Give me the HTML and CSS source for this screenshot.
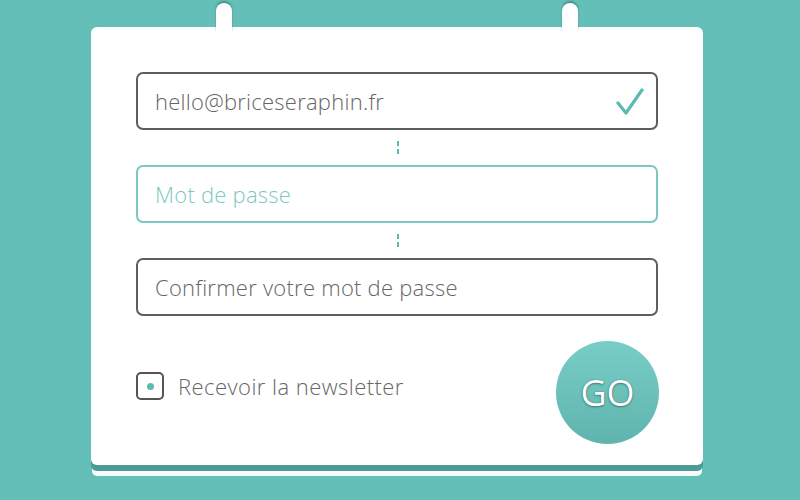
FILE: index.html
```html
<!DOCTYPE html>
<html lang="fr">
<head>
<meta charset="utf-8">
<title>Inscription</title>
<link rel="stylesheet" href="styles.css">
</head>
<body>
<div class="stage">
  <form class="card">
    <span class="peg peg-left"></span>
    <span class="peg peg-right"></span>

    <div class="field field-valid">
      <span class="field-text">hello@briceseraphin.fr</span>
      <svg class="check" width="28" height="28" viewBox="0 0 28 28" aria-hidden="true">
        <path d="M2 15 L10 25 L26 2" fill="none" stroke="#5dbab2" stroke-width="3.2" stroke-linecap="round" stroke-linejoin="round"/>
      </svg>
    </div>

    <div class="link"><span class="dash"></span></div>

    <div class="field field-focus">
      <span class="field-text placeholder">Mot de passe</span>
    </div>

    <div class="link"><span class="dash"></span></div>

    <div class="field">
      <span class="field-text">Confirmer votre mot de passe</span>
    </div>

    <div class="bottom">
      <label class="newsletter">
        <span class="box"><span class="dot"></span></span>
        <span class="label-text">Recevoir la newsletter</span>
      </label>
      <button type="button" class="go">GO</button>
    </div>
  </form>
</div>
</body>
</html>
```

FILE: styles.css
```css
* { box-sizing: border-box; }

html, body {
  margin: 0;
  padding: 0;
}

body {
  width: 800px;
  height: 500px;
  overflow: hidden;
  background: #63bfb7;
  font-family: "Open Sans", "Liberation Sans", sans-serif;
}

.stage {
  padding-top: 27px;
  padding-left: 91px;
}

.card {
  position: relative;
  width: 612px;
  height: 438px;
  background: #ffffff;
  border-radius: 6px;
  padding: 45px 45px 0 45px;
  box-shadow: 0 6px 0 #4c9c95, 0 12px 0 -1px #f6fbfa;
}

.peg {
  position: absolute;
  top: -24px;
  width: 16px;
  height: 30px;
  background: #ffffff;
  border-radius: 8px 8px 0 0;
  box-shadow: 0 -2px 2px rgba(40, 90, 85, 0.45);
}
.peg-left { left: 125px; }
.peg-right { left: 471px; }

.field {
  height: 58px;
  border: 2px solid #5e5e5e;
  border-radius: 7px;
  display: flex;
  align-items: center;
  justify-content: space-between;
  padding: 0 12px 0 17px;
}

.field-focus {
  border-color: #79c9c1;
}

.field-text {
  font-size: 22px;
  font-weight: 300;
  color: #666666;
  letter-spacing: 0.25px;
}

.placeholder {
  color: #7cc9c1;
}

.check {
  margin-top: 1px;
}

.link {
  height: 35px;
  display: flex;
  justify-content: center;
  align-items: center;
}

.dash {
  width: 2px;
  height: 13px;
  margin-left: 2px;
  background: repeating-linear-gradient(to bottom, #5dbab2 0 5px, transparent 5px 8px);
}

.bottom {
  margin-top: 25px;
  display: flex;
  justify-content: space-between;
  align-items: flex-start;
}

.newsletter {
  display: flex;
  align-items: center;
  gap: 14px;
  padding-top: 30px;
}

.box {
  width: 28px;
  height: 28px;
  border: 2px solid #555555;
  border-radius: 5px;
  display: flex;
  align-items: center;
  justify-content: center;
}

.dot {
  width: 7px;
  height: 7px;
  border-radius: 50%;
  background: #5dbab2;
}

.label-text {
  font-size: 22px;
  font-weight: 300;
  color: #666666;
  letter-spacing: 0.45px;
}

.go {
  width: 103px;
  height: 103px;
  margin-right: -1px;
  border: none;
  border-radius: 50%;
  background: linear-gradient(to bottom, #78cdc7 0%, #5fb4ae 100%);
  color: #ffffff;
  font-family: "Open Sans", "Liberation Sans", sans-serif;
  font-size: 36px;
  font-weight: 400;
  padding: 0;
  text-shadow: 0 0 1px rgba(30, 70, 66, 0.8), 0 1px 2px rgba(30, 70, 66, 0.5);
}
```
